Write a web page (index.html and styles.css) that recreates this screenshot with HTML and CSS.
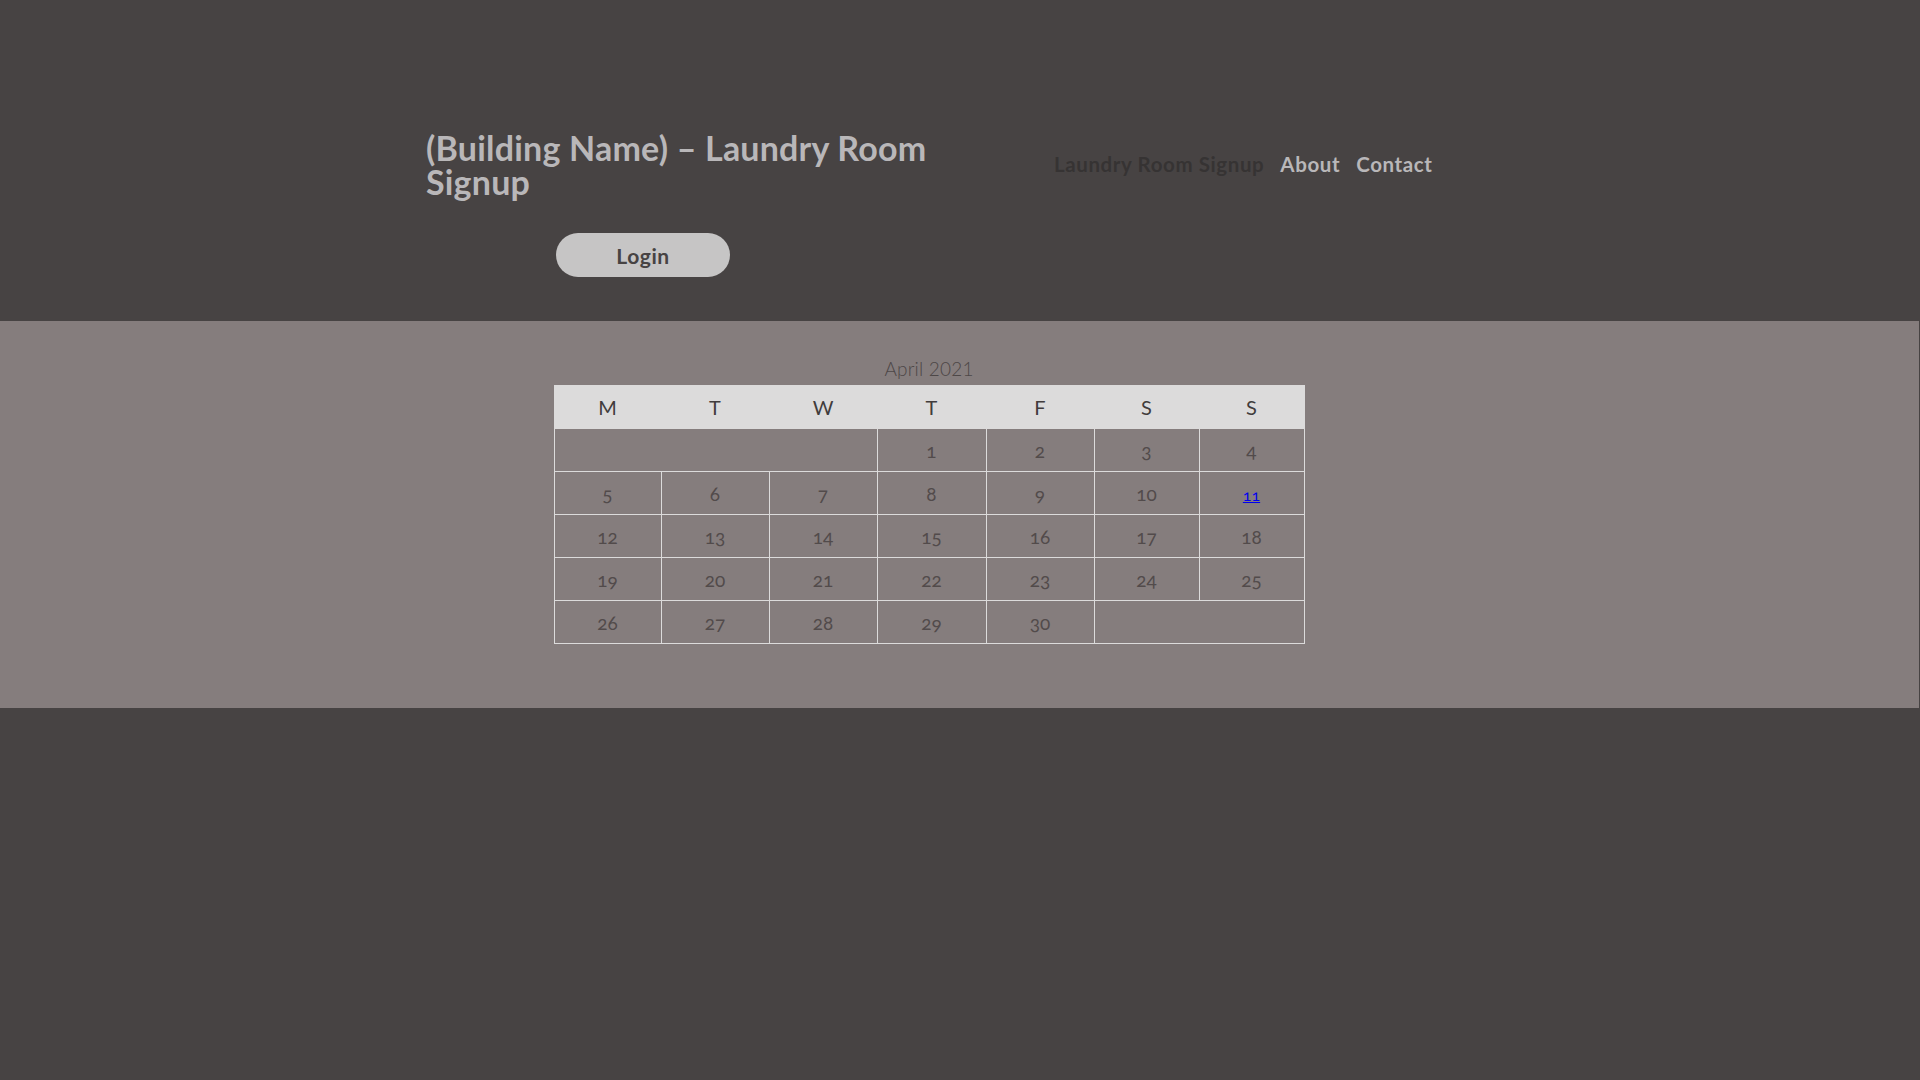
FILE: index.html
```html
<!DOCTYPE html>
<html lang="en">
<head>
<meta charset="utf-8">
<title>Laundry Room Signup</title>
<link rel="stylesheet" href="styles.css">
</head>
<body>
<header class="site-header">
  <div class="header-inner">
    <div class="brand">
      <h1 class="site-title">(Building Name) – Laundry Room Signup</h1>
      <button class="login-btn" type="button">Login</button>
    </div>
    <nav class="main-nav">
      <a class="nav-link current" href="#">Laundry Room Signup</a>
      <a class="nav-link" href="#">About</a>
      <a class="nav-link" href="#">Contact</a>
    </nav>
  </div>
</header>
<main class="band">
  <table class="calendar">
    <caption class="cal-caption">April 2021</caption>
    <colgroup>
      <col class="c1"><col class="c2"><col class="c3"><col class="c4"><col class="c5"><col class="c6"><col class="c7">
    </colgroup>
    <thead>
      <tr><th>M</th><th>T</th><th>W</th><th>T</th><th>F</th><th>S</th><th>S</th></tr>
    </thead>
    <tbody>
      <tr><td colspan="3"></td><td>1</td><td>2</td><td>3</td><td>4</td></tr>
      <tr><td>5</td><td>6</td><td>7</td><td>8</td><td>9</td><td>10</td><td><a class="today" href="#">11</a></td></tr>
      <tr><td>12</td><td>13</td><td>14</td><td>15</td><td>16</td><td>17</td><td>18</td></tr>
      <tr><td>19</td><td>20</td><td>21</td><td>22</td><td>23</td><td>24</td><td>25</td></tr>
      <tr><td>26</td><td>27</td><td>28</td><td>29</td><td>30</td><td colspan="2"></td></tr>
    </tbody>
  </table>
</main>
</body>
</html>
```

FILE: styles.css
```css
html, body {
  margin: 0;
  padding: 0;
}
body {
  background: #474343;
  font-family: Lato, "Open Sans", "DejaVu Sans", sans-serif;
  min-height: 1080px;
}
.site-header {
  height: 321px;
  box-sizing: border-box;
  padding-top: 131px;
}
.header-inner {
  width: 1068px;
  margin: 0 auto;
  display: flex;
  align-items: flex-start;
  box-sizing: border-box;
}
.brand {
  width: 628px;
}
.site-title {
  margin: 0;
  width: 530px;
  font-family: Lato, "Open Sans", sans-serif;
  font-weight: 700;
  font-size: 34px;
  line-height: 34px;
  color: #b9b7b9;
  letter-spacing: 0.2px;
}
.login-btn {
  display: block;
  margin: 34px 0 0 130px;
  width: 174px;
  height: 44px;
  border: none;
  border-radius: 22px;
  background: #c6c5c5;
  color: #474343;
  font-family: Lato, "Open Sans", sans-serif;
  font-weight: 700;
  font-size: 21px;
  letter-spacing: 0.6px;
  padding: 0;
  cursor: pointer;
}
.main-nav {
  display: flex;
  gap: 16px;
  margin-top: 21px;
}
.nav-link {
  text-decoration: none;
  font-weight: 700;
  font-size: 20.5px;
  letter-spacing: 0.6px;
  line-height: 24px;
  color: #b9b7b9;
}
.nav-link.current {
  color: #363333;
}
.band {
  display: block;
  background: #857d7d;
  height: 387px;
  box-sizing: border-box;
  padding-top: 37px;
  margin-right: 1px;
}
.calendar {
  margin: 0 0 0 calc(50% - 406px);
  width: 751px;
  table-layout: fixed;
  border-collapse: collapse;
  border: 1px solid #dcdbdb;
}
.cal-caption {
  font-family: Lato, "Open Sans", sans-serif;
  font-weight: 300;
  font-size: 19px;
  line-height: 22px;
  height: 27px;
  color: #4d4747;
  letter-spacing: 0.2px;
}
.c1 { width: 107px; }
.c2 { width: 108px; }
.c3 { width: 108px; }
.c4 { width: 109px; }
.c5 { width: 108px; }
.c6 { width: 105px; }
.c7 { width: 105px; }
.calendar th {
  background: #dcdbdb;
  height: 42px;
  padding: 0;
  font-weight: 400;
  font-size: 20px;
  color: #413c3c;
  text-align: center;
  border: 1px solid #dcdbdb;
}
.calendar td {
  height: 42px;
  padding: 0;
  text-align: center;
  border: 1px solid #dcdbdb;
  font-weight: 400;
  font-size: 19px;
  color: #524b4b;
  font-variant-numeric: oldstyle-nums;
}
.today {
  color: #0000ee;
  font-size: 16px;
  text-decoration: underline;
}
```
